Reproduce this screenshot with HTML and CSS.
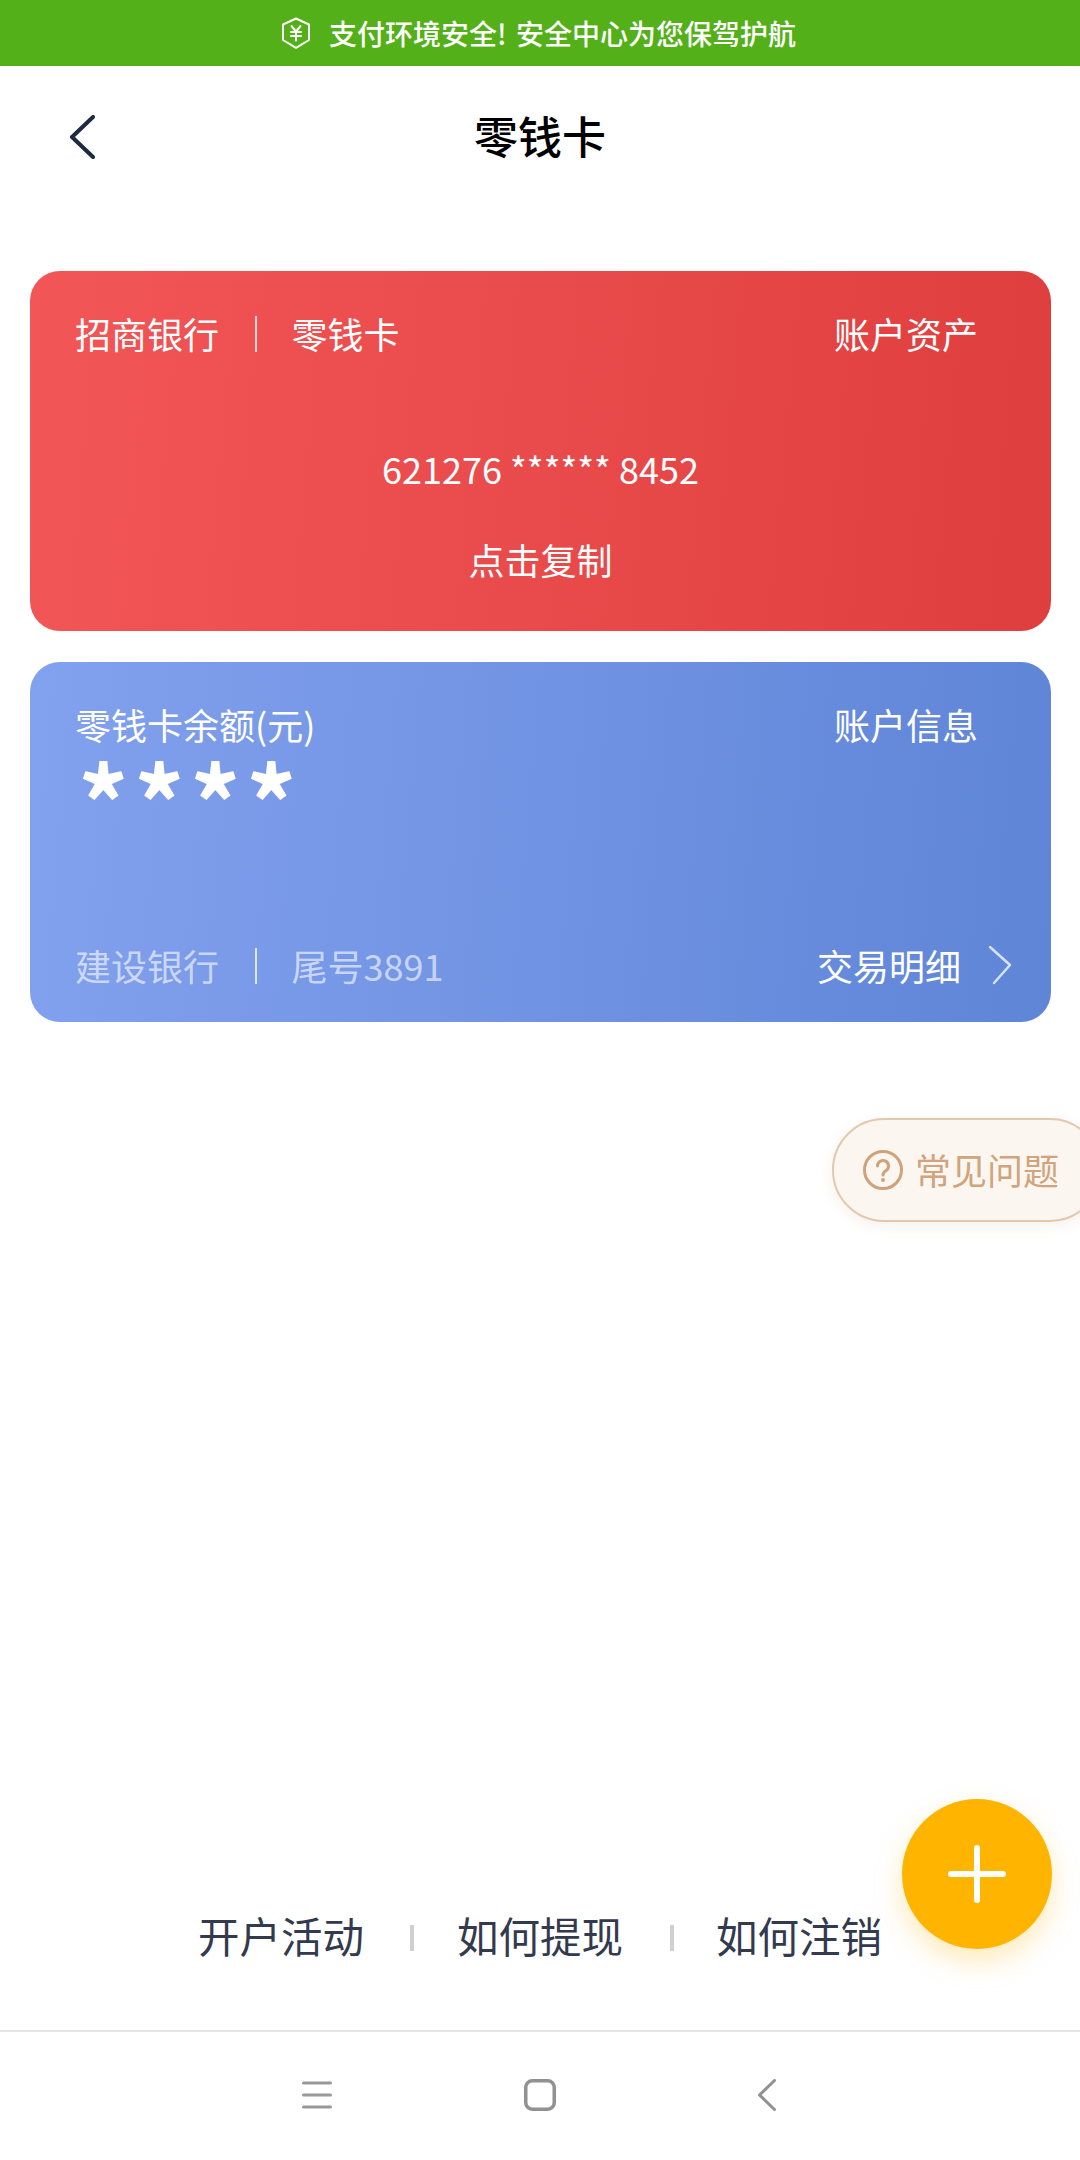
FILE: index.html
```html
<!DOCTYPE html>
<html lang="zh-CN">
<head>
<meta charset="utf-8">
<title>零钱卡</title>
<link rel="stylesheet" href="styles.css">
</head>
<body>
<div class="app">
  <div class="banner">
    <svg class="shield" viewBox="0 0 30 32" fill="none" stroke="#fff" stroke-width="2" stroke-linejoin="round" stroke-linecap="round">
      <path d="M15 1.500 28 7.500V23L15 30.800 2 23V7.500Z"/>
      <path d="M10.500 9 15 14.500 19.500 9M15 14.500v9M10 15h10M10 19h10"/>
    </svg>
    <span>支付环境安全! 安全中心为您保驾护航</span>
  </div>
  <header class="header">
    <svg class="back" viewBox="0 0 26 44" fill="none" stroke="#1e2a42" stroke-width="4" stroke-linecap="round" stroke-linejoin="round">
      <path d="M24 2 3 22l21 20"/>
    </svg>
    <h1 class="title">零钱卡</h1>
  </header>
  <main class="cards">
    <section class="card card-red">
      <div class="row">
        <div class="group"><span>招商银行</span><i class="sep"></i><span>零钱卡</span></div>
        <span class="right-label">账户资产</span>
      </div>
      <div class="number">621276 ****** 8452</div>
      <div class="copy">点击复制</div>
    </section>
    <section class="card card-blue">
      <div class="row">
        <span>零钱卡余额(元)</span>
        <span class="right-label">账户信息</span>
      </div>
      <div class="stars">****</div>
      <div class="row row-bottom">
        <div class="group group-dim"><span>建设银行</span><i class="sep"></i><span>尾号3891</span></div>
        <div class="detail">
          <span>交易明细</span>
          <svg class="chev" viewBox="0 0 24 40" fill="none" stroke="#fff" stroke-opacity=".75" stroke-width="2.500" stroke-linecap="round" stroke-linejoin="round">
            <path d="M2 2 22 20 6 38"/>
          </svg>
        </div>
      </div>
    </section>
  </main>
  <aside class="faq">
    <svg class="faq-icon" viewBox="0 0 40 40" fill="none" stroke="#cfa27a" stroke-width="3" stroke-linecap="round">
      <circle cx="20" cy="20" r="18.500"/>
      <path d="M14.500 16a5.500 5.500 0 1 1 8.300 4.700C21 21.800 20 23 20 25"/>
      <circle cx="20" cy="30" r="1" stroke-width="2"/>
    </svg>
    <span class="faq-text">常见问题</span>
  </aside>
  <button class="fab" type="button" aria-label="添加">
    <svg class="plus" viewBox="0 0 58 58" fill="none" stroke="#fff" stroke-width="6" stroke-linecap="round">
      <path d="M29 3v52M3 29h52"/>
    </svg>
  </button>
  <nav class="links">
    <span>开户活动</span><i class="link-sep"></i><span>如何提现</span><i class="link-sep"></i><span>如何注销</span>
  </nav>
  <footer class="sysnav">
    <svg class="sys-menu" viewBox="0 0 30 28" fill="none" stroke="#999" stroke-width="3" stroke-linecap="round">
      <path d="M1.500 2h27M1.500 14h27M1.500 26h27"/>
    </svg>
    <svg class="sys-home" viewBox="0 0 32 32" fill="none" stroke="#919191" stroke-width="3.500">
      <rect x="1.750" y="1.750" width="28.500" height="28.500" rx="6.500"/>
    </svg>
    <svg class="sys-back" viewBox="0 0 18 32" fill="none" stroke="#919191" stroke-width="3" stroke-linecap="round" stroke-linejoin="round">
      <path d="M16.500 1.500 1.500 16l15 14.500"/>
    </svg>
  </footer>
</div>
</body>
</html>
```
FILE: styles.css
```css
* { box-sizing: border-box; }
html, body { margin: 0; padding: 0; }
body {
  width: 1080px;
  height: 2160px;
  background: #fff;
  font-family: "Noto Sans CJK SC", "Noto Sans", sans-serif;
  overflow: hidden;
}
.app {
  position: relative;
  width: 1080px;
  height: 2160px;
  display: flex;
  flex-direction: column;
}
.banner {
  height: 66px;
  background: #53b019;
  color: #fff;
  font-size: 28px;
  font-weight: 500;
  word-spacing: 3px;
  display: flex;
  align-items: center;
  justify-content: center;
  gap: 18px;
  padding-right: 3px;
}
.shield { width: 30px; height: 32px; }
.header {
  height: 144px;
  display: flex;
  align-items: center;
  justify-content: center;
  position: relative;
  padding-bottom: 6px;
}
.back {
  position: absolute;
  left: 69px;
  top: 49px;
  width: 26px;
  height: 44px;
}
.title {
  margin: 0;
  font-size: 44px;
  font-weight: 500;
  color: #000;
  line-height: 56px;
}
.cards {
  padding: 61px 29px 0 30px;
  display: flex;
  flex-direction: column;
  gap: 31px;
}
.card {
  height: 360px;
  border-radius: 30px;
  color: #fff;
  font-size: 36px;
  line-height: 50px;
  padding: 37px 39px 0 45px;
  display: flex;
  flex-direction: column;
}
.card-red { background: linear-gradient(95deg, #f35657 0%, #df3e3e 100%); }
.card-blue { background: linear-gradient(95deg, #82a1ee 0%, #5f85d7 100%); }
.row {
  display: flex;
  justify-content: space-between;
  align-items: center;
}
.group { display: flex; align-items: center; }
.group-dim { color: rgba(255, 255, 255, .62); }
.sep {
  width: 1.500px;
  height: 36px;
  margin: 1px 35px 0 36px;
  background: rgba(255, 255, 255, .75);
}
.right-label { padding-right: 34px; }
.number { margin-top: 85px; padding-right: 6px; text-align: center; }
.copy { margin-top: 41px; padding-right: 6px; text-align: center; }
.stars {
  margin-top: 20px;
  padding-left: 3px;
  font-size: 100px;
  font-weight: 700;
  line-height: 60px;
  height: 60px;
  letter-spacing: 5.300px;
}
.row-bottom { margin-top: auto; margin-bottom: 32px; }
.detail { display: flex; align-items: center; gap: 27px; }
.chev { width: 24px; height: 40px; }
.faq {
  position: absolute;
  left: 832px;
  top: 1118px;
  width: 270px;
  height: 104px;
  border: 2px solid #e3c8ae;
  border-radius: 52px;
  background: #fcf6f1;
  box-shadow: 0 4px 14px rgba(190, 150, 110, .14);
  color: #d0a47c;
  font-size: 36px;
  display: flex;
  align-items: center;
  gap: 12px;
  padding-left: 29px;
}
.faq-icon { width: 40px; height: 40px; flex: none; }
.faq-text { padding-bottom: 2px; }
.fab {
  position: absolute;
  left: 902px;
  top: 1799px;
  width: 150px;
  height: 150px;
  border: 0;
  border-radius: 50%;
  background: #ffb400;
  box-shadow: 0 12px 28px rgba(255, 180, 0, .28);
  padding: 0;
  display: flex;
  align-items: center;
  justify-content: center;
}
.plus { width: 58px; height: 58px; }
.links {
  margin-top: auto;
  height: 60px;
  display: flex;
  align-items: center;
  justify-content: center;
  color: #333a4d;
  font-size: 41.500px;
  gap: 44.500px;
  margin-bottom: 65px;
}
.link-sep { width: 4px; height: 26px; margin: 6px -2px 0 2px; background: #d0d0d0; }
.sysnav {
  height: 130px;
  border-top: 2px solid #e6e6e6;
  position: relative;
  display: grid;
  grid-template-columns: 302px 30px 192px 32px 202px 18px;
  align-items: center;
  padding-bottom: 2px;
}
.sys-menu { grid-column: 2; width: 30px; height: 28px; }
.sys-home { grid-column: 4; width: 32px; height: 32px; }
.sys-back { grid-column: 6; width: 18px; height: 32px; }
```
